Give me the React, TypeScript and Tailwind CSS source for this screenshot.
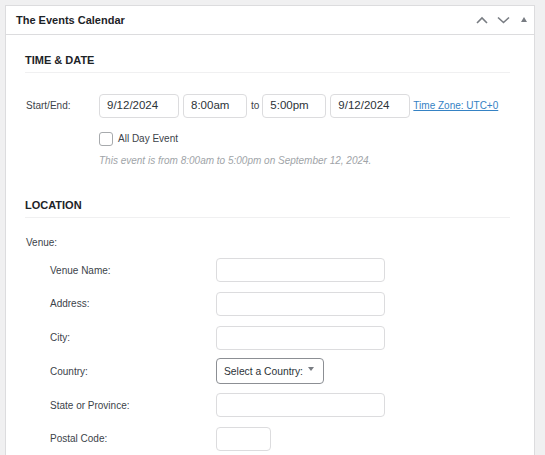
import React from "react";

const font = { fontFamily: "'Liberation Sans', Arial, sans-serif" };

function ChevronUp() {
  return (
    <svg width="12" height="8" viewBox="0 0 12 8" fill="none">
      <polyline points="1,7 6,2 11,7" stroke="#787c82" strokeWidth="1.6" />
    </svg>
  );
}

function ChevronDown() {
  return (
    <svg width="13" height="8" viewBox="0 0 13 8" fill="none">
      <polyline points="1,1.5 6.5,6.5 12,1.5" stroke="#787c82" strokeWidth="1.6" />
    </svg>
  );
}

function Caret() {
  return (
    <svg width="6" height="5" viewBox="0 0 6 5">
      <polygon points="3,0 6,5 0,5" fill="#787c82" />
    </svg>
  );
}

function TextBox({ value, w }: { value?: string; w: string }) {
  return (
    <div
      className={`${w} h-[24px] flex items-center pl-[7px] border border-[#dcdcde] rounded-[4px] bg-white text-[11.5px] text-[#2c3338] whitespace-nowrap`}
    >
      {value}
    </div>
  );
}

const venueFields = ["Venue Name:", "Address:", "City:", "Country:", "State or Province:", "Postal Code:"];

export default function App() {
  return (
    <div className="w-[545px] h-[455px] overflow-hidden bg-[#f0f0f1] pt-[5px] pl-[5px]" style={font}>
      <div className="w-[530px] h-[460px] bg-white border border-[#dcdcde]">
        {/* header */}
        <div className="h-[29px] border-b border-[#dcdcde] flex items-center pl-[10px] pr-[7px]">
          <span className="text-[11px] font-bold text-[#1d2327]">The Events Calendar</span>
          <div className="ml-auto flex items-center">
            <span className="mr-[9px] flex"><ChevronUp /></span>
            <span className="mr-[11px] flex"><ChevronDown /></span>
            <span className="flex mb-[1px]"><Caret /></span>
          </div>
        </div>

        <div className="ml-[19px] mr-[24px]">
          {/* time & date */}
          <div className="mt-[17px] pb-[4px] border-b border-[#f0f0f1] text-[11px] leading-[16px] font-bold text-[#1d2327]">
            TIME &amp; DATE
          </div>

          <div className="mt-[21px] flex items-center whitespace-nowrap">
            <div className="w-[74px] pl-[1px] text-[10px] text-[#3c434a] -mt-[2px]">Start/End:</div>
            <TextBox value="9/12/2024" w="w-[80px]" />
            <TextBox value="8:00am" w="w-[64px] ml-[4px]" />
            <span className="ml-[4px] mr-[3px] text-[10px] text-[#3c434a] -mt-[2px]">to</span>
            <TextBox value="5:00pm" w="w-[64px]" />
            <TextBox value="9/12/2024" w="w-[80px] ml-[4px]" />
            <a className="ml-[3px] text-[10px] text-[#3582c4] underline -mt-[2px]">Time Zone: UTC+0</a>
          </div>

          <div className="mt-[13px] ml-[74px] flex items-center">
            <div className="w-[14px] h-[14px] border border-[#a7aaad] rounded-[3px] bg-white" />
            <span className="ml-[5px] text-[10px] text-[#3c434a]">All Day Event</span>
          </div>

          <div className="mt-[8px] ml-[74px] text-[10px] leading-[14px] italic text-[#a0a4a8] whitespace-nowrap">
            This event is from 8:00am to 5:00pm on September 12, 2024.
          </div>

          {/* location */}
          <div className="mt-[29px] pb-[4px] border-b border-[#f0f0f1] text-[11px] leading-[16px] font-bold text-[#1d2327]">
            LOCATION
          </div>

          <div className="mt-[18px] pl-[1px] text-[10px] leading-[14px] text-[#3c434a]">Venue:</div>

          <div className="mt-[8px] flex flex-col gap-[9.8px]">
            {venueFields.map((label) => (
              <div key={label} className="h-[24px] flex items-center">
                <div className="w-[191px] pl-[25px] text-[10px] text-[#3c434a]">{label}</div>
                {label === "Country:" ? (
                  <div className="w-[108px] h-[26px] flex items-center pl-[7px] pr-[9px] border border-[#8c8f94] rounded-[4px] bg-white whitespace-nowrap">
                    <span className="text-[10.3px] text-[#2c3338]">Select a Country:</span>
                    <svg className="ml-auto -mt-[4px]" width="6" height="4" viewBox="0 0 6 4">
                      <polygon points="0,0 6,0 3,4" fill="#787c82" />
                    </svg>
                  </div>
                ) : (
                  <TextBox w={label === "Postal Code:" ? "w-[55px]" : "w-[169px]"} />
                )}
              </div>
            ))}
          </div>
        </div>
      </div>
    </div>
  );
}
